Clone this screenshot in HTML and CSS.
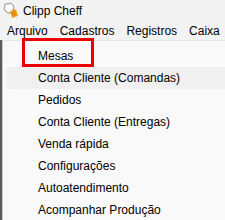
FILE: index.html
```html
<!DOCTYPE html>
<html>

<head>
    <title>Clipp Cheff</title>
    <link rel="stylesheet" href="styles.css">
</head>

<body>
    <div class="titlebar">
        <svg class="app-icon" width="16" height="16" viewBox="0 0 16 16">
            <path d="M3 4 Q2 1 6 2 Q9 0 11 3 Q13 5 11 8 Q12 11 8 11 Q5 12 4 9 Q1 8 3 4 Z" fill="#fff" stroke="#8a8a8a" stroke-width="1"/>
            <path d="M8 9 L14 7 L16 14 L10 16 Z" fill="#f0a020"/>
            <path d="M9 10 L13 9 L14 13 L11 14 Z" fill="#e08a10"/>
        </svg>
        <span class="app-title">Clipp Cheff</span>
    </div>

    <div class="menubar">
        <span class="menu-item">Arquivo</span>
        <span class="menu-item">Cadastros</span>
        <span class="menu-item">Registros</span>
        <span class="menu-item">Caixa</span>
    </div>

    <div class="window-edge">
        <div class="dropdown">
            <div class="drop-item">
                Mesas
                <span class="highlight-box"></span>
            </div>
            <div class="drop-item hover">Conta Cliente (Comandas)</div>
            <div class="drop-item">Pedidos</div>
            <div class="drop-item">Conta Cliente (Entregas)</div>
            <div class="drop-item">Venda rápida</div>
            <div class="drop-item">Configurações</div>
            <div class="drop-item">Autoatendimento</div>
            <div class="drop-item">Acompanhar Produção</div>
        </div>
    </div>
</body>

</html>
```

FILE: styles.css
```css
body {
    margin: 0;
    background-color: #f3f3f3;
    font-family: "Liberation Sans", Arial, sans-serif;
    font-size: 12px;
    color: #000;
    overflow: hidden;
}

.titlebar {
    height: 19px;
    display: flex;
    align-items: center;
    padding-left: 2px;
    background-color: #f3f3f3;
}

.app-icon {
    display: block;
}

.app-title {
    margin-left: 5px;
    padding-top: 2px;
}

.menubar {
    height: 19px;
    padding-top: 2px;
    padding-left: 1px;
    display: flex;
    align-items: center;
    background-color: #f3f3f3;
}

.menu-item {
    padding: 0 6px;
    white-space: nowrap;
}

.window-edge {
    border-left: 2px solid #5a5a5a;
    height: 180px;
}

.dropdown {
    border-left: 1px solid #c8c8c8;
    border-top: 1px solid #e5e5e5;
    background-color: #f9f9f9;
    padding-top: 4px;
    height: 175px;
}

.drop-item {
    position: relative;
    height: 22px;
    line-height: 22px;
    padding-left: 35px;
}

.drop-item.hover {
    background-color: #f0f0f0;
    margin-left: 3px;
    padding-left: 32px;
    border-radius: 4px 0 0 4px;
}

/* red annotation drawn over the first item */
.highlight-box {
    position: absolute;
    left: 19px;
    top: -7px;
    width: 66px;
    height: 23px;
    border: 3px solid #ee0000;
}
```
